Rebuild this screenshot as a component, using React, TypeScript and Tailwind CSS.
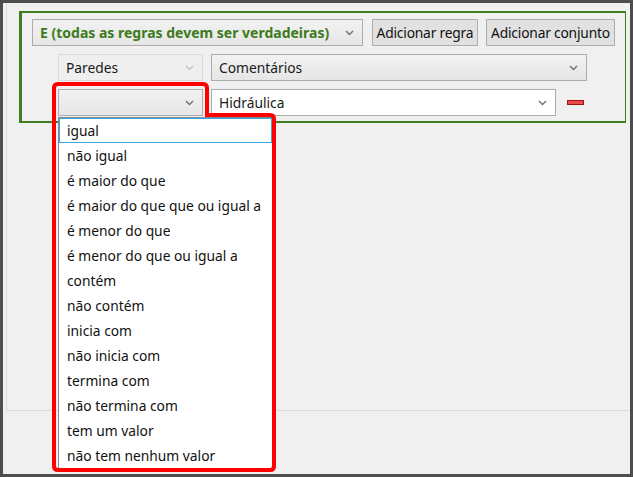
import React from 'react';

const font = { fontFamily: '"Noto Sans", "Open Sans", sans-serif' };

function Chevron({ light = false }: { light?: boolean }) {
  return (
    <svg width="9" height="6" viewBox="0 0 9 6" className="shrink-0">
      <polyline
        points="1,1 4.5,4.5 8,1"
        fill="none"
        stroke={light ? '#c4c4c4' : '#707070'}
        strokeWidth="1.4"
      />
    </svg>
  );
}

function Select({
  label,
  width,
  white = false,
  disabled = false,
  bold = false,
  children,
}: {
  label?: string;
  width: string;
  white?: boolean;
  disabled?: boolean;
  bold?: boolean;
  children?: React.ReactNode;
}) {
  return (
    <div className={`relative h-[27px] ${width} shrink-0`}>
      <div
        className={`flex h-full items-center justify-between border pl-[7px] pr-[8px] ${
          white
            ? 'border-[#adadad] bg-white'
            : disabled
              ? 'border-[#d9d9d9] bg-[#efefef]'
              : 'border-[#acacac] bg-gradient-to-b from-[#f2f2f2] to-[#e6e6e6]'
        }`}
      >
        <span
          className={`whitespace-nowrap leading-none ${
            bold ? 'text-[14px] font-bold text-[#3d7a1b]' : 'text-[13.8px] text-[#1a1a1a]'
          }`}
        >
          {label}
        </span>
        <Chevron light={disabled} />
      </div>
      {children}
    </div>
  );
}

const operators = [
  'igual',
  'não igual',
  'é maior do que',
  'é maior do que que ou igual a',
  'é menor do que',
  'é menor do que ou igual a',
  'contém',
  'não contém',
  'inicia com',
  'não inicia com',
  'termina com',
  'não termina com',
  'tem um valor',
  'não tem nenhum valor',
];

export default function App() {
  return (
    <div
      className="relative h-[477px] w-[633px] overflow-hidden border-[3px] border-[#4d4d4d] bg-[#f0f0f0]"
      style={font}
    >
      {/* panel */}
      <div className="ml-[3px] h-[408px] border-b border-l border-[#dadada] pt-[8px] pl-[12px] pr-[4px]">
        {/* green group */}
        <div className="border-[#3f7d1f] border-l-[3px] border-t-2 border-r border-b-2 pt-[6px] pb-[5px] pl-[10px]">
          <div className="flex gap-[8px]">
            <Select label="E (todas as regras devem ser verdadeiras)" width="w-[331px]" bold />
            <button className="ml-[1px] h-[27px] w-[106px] whitespace-nowrap border border-[#adadad] bg-[#e1e1e1] px-0 text-[13.8px] leading-none tracking-[-0.2px] text-[#111]">
              Adicionar regra
            </button>
            <button className="h-[27px] w-[129px] whitespace-nowrap border border-[#adadad] bg-[#e1e1e1] px-0 text-[13.8px] leading-none tracking-[-0.2px] text-[#111]">
              Adicionar conjunto
            </button>
          </div>

          <div className="mt-[8px] flex gap-[8px] pl-[26px]">
            <Select label="Paredes" width="w-[145px]" disabled />
            <Select label="Comentários" width="w-[376px]" />
          </div>

          <div className="mt-[8px] flex items-center gap-[8px] pl-[26px]">
            <Select width="w-[145px]">
              {/* open dropdown list */}
              <div className="absolute left-0 top-[28px] z-10 w-[215px] border border-[#828790] bg-white">
                {operators.map((op, i) => (
                  <div
                    key={op}
                    className={`flex h-[25px] items-center whitespace-nowrap px-[7px] text-[13.8px] leading-none text-[#111] ${
                      i === 0 ? 'border border-[#3aa8dc]' : 'border border-transparent'
                    }`}
                  >
                    {op}
                  </div>
                ))}
              </div>
            </Select>
            <Select label="Hidráulica" width="w-[345px]" white />
            <div className="ml-[3px] h-[5px] w-[17px] border border-[#9b1515] bg-[#ec4a4a]" />
          </div>
        </div>
      </div>

      {/* annotation outline */}
      <svg
        className="pointer-events-none absolute left-[-3px] top-[-3px] z-20"
        width="633"
        height="477"
        viewBox="0 0 633 477"
      >
        <path
          d="M58,84 H203 Q207,84 207,88 V115 H270 Q274,115 274,119 V466 Q274,470 270,470 H58 Q54,470 54,466 V88 Q54,84 58,84 Z"
          fill="none"
          stroke="#ff0000"
          strokeWidth="4"
        />
      </svg>
    </div>
  );
}
